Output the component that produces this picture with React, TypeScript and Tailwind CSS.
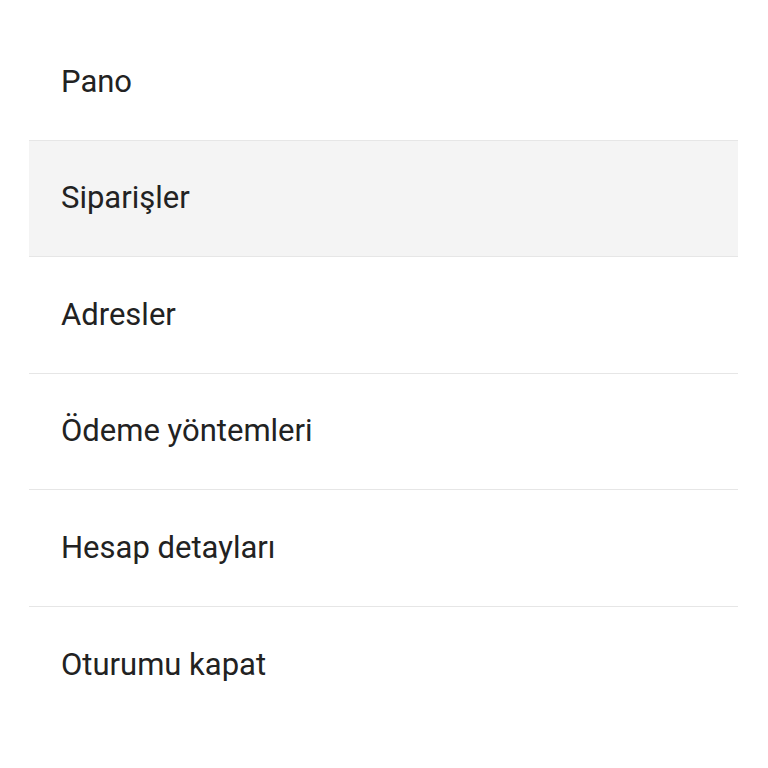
const items = [
  { label: "Pano", active: false },
  { label: "Siparişler", active: true },
  { label: "Adresler", active: false },
  { label: "Ödeme yöntemleri", active: false },
  { label: "Hesap detayları", active: false },
  { label: "Oturumu kapat", active: false },
];

export default function App() {
  return (
    <div className="min-h-screen bg-white pt-[24px] font-['Roboto',sans-serif]">
      <ul className="ml-[29px] w-[709px]">
        {items.map((item, i) => (
          <li
            key={item.label}
            className={`flex h-[116.5px] items-center pl-[32px] text-[31px] text-[#222222] ${
              i < items.length - 1 ? "border-b border-[#e6e6e6]" : ""
            } ${item.active ? "bg-[#f4f4f4]" : ""}`}
          >
            {item.label}
          </li>
        ))}
      </ul>
    </div>
  );
}
